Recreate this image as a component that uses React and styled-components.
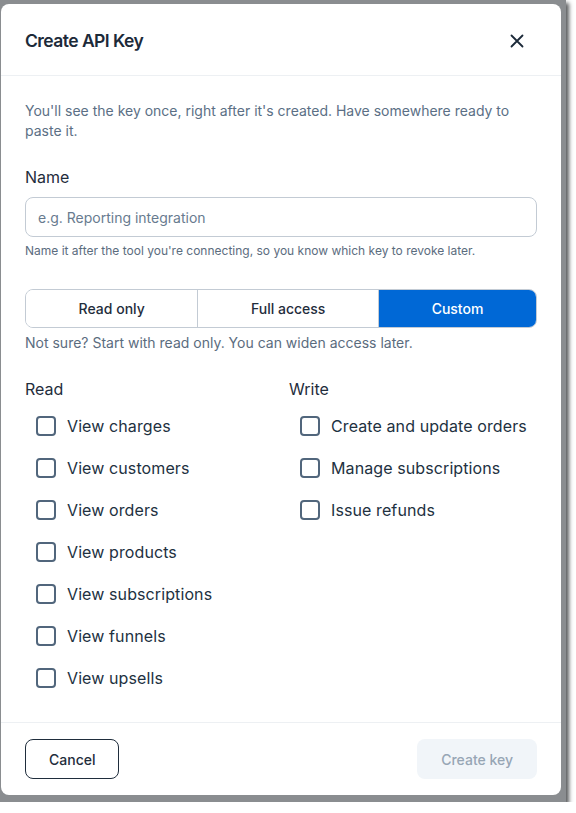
import React, { useState } from "react";
import styled, { createGlobalStyle } from "styled-components";

const Global = createGlobalStyle`
  html, body { margin: 0; padding: 0; background: #ffffff; }
  body { font-family: Inter, "Noto Sans", Arial, sans-serif; }
  * { box-sizing: border-box; }
`;

const Backdrop = styled.div`
  width: 566px;
  height: 802px;
  background: #8a8d90;
  padding: 4px 5px 0 1px;
  box-shadow: 3px 3px 4px rgba(50, 52, 55, 0.8);
`;

const Dialog = styled.div`
  width: 560px;
  height: 791px;
  background: #ffffff;
  border-radius: 8px;
  display: flex;
  flex-direction: column;
  overflow: hidden;
`;

const Header = styled.header`
  height: 72px;
  flex: none;
  padding: 2px 24px 0;
  display: flex;
  align-items: center;
  justify-content: space-between;
  border-bottom: 1px solid #edf0f3;
`;

const Title = styled.h2`
  margin: 0;
  font-size: 17.5px;
  line-height: 24px;
  font-weight: 600;
  letter-spacing: -0.55px;
  color: #1c2a39;
`;

const CloseButton = styled.button`
  width: 40px;
  height: 40px;
  border: none;
  background: transparent;
  display: flex;
  align-items: center;
  justify-content: center;
  color: #1c2a39;
  padding: 0;
  cursor: pointer;
`;

const Body = styled.div`
  flex: 1;
  padding: 25px 24px 0;
  display: flex;
  flex-direction: column;
`;

const Lead = styled.p`
  margin: 0;
  font-size: 14px;
  line-height: 20px;
  color: #5b6f85;
`;

const Label = styled.div`
  margin-top: ${(p) => p.$top || 0}px;
  font-size: 16px;
  line-height: 24px;
  font-weight: 400;
  color: #1f2d3c;
`;

const Input = styled.input`
  margin-top: 8px;
  height: 40px;
  width: 100%;
  border: 1px solid #c3cbd4;
  border-radius: 8px;
  padding: 0 12px;
  font-family: inherit;
  font-size: 14px;
  color: #1f2d3c;
  outline: none;
  &::placeholder { color: #687b8f; }
`;

const Hint = styled.div`
  margin-top: ${(p) => p.$top || 6}px;
  font-size: ${(p) => p.$size || 12}px;
  line-height: ${(p) => (p.$size === 14 ? 20 : 16)}px;
  color: #5b6c7e;
`;

const Segmented = styled.div`
  margin-top: 30px;
  height: 39px;
  display: flex;
  border: 1px solid #c3cbd4;
  border-radius: 8px;
  overflow: hidden;
`;

const Segment = styled.button`
  flex: 1 1 auto;
  padding: 0 16px;
  border: none;
  border-left: ${(p) => (p.$first ? "none" : "1px solid #c3cbd4")};
  background: ${(p) => (p.$active ? "#0068d6" : "#ffffff")};
  color: ${(p) => (p.$active ? "#ffffff" : "#1f2d3c")};
  font-family: inherit;
  font-size: 14px;
  font-weight: 500;
  cursor: pointer;
`;

const Scopes = styled.div`
  margin-top: 24px;
  display: grid;
  grid-template-columns: 1fr 1fr;
  column-gap: 16px;
  align-items: start;
`;

const ScopeColumn = styled.div`
  display: flex;
  flex-direction: column;
`;

const ScopeHeading = styled.div`
  font-size: 16px;
  line-height: 24px;
  font-weight: 400;
  color: #1f2d3c;
  margin-bottom: 4px;
`;

const ScopeItem = styled.label`
  height: 42px;
  display: flex;
  align-items: center;
  gap: 11px;
  padding-left: 11px;
  font-size: 16px;
  letter-spacing: 0.1px;
  color: #22313f;
  cursor: pointer;
`;

const Box = styled.span`
  width: 20px;
  height: 20px;
  flex: none;
  border: 2px solid #51667c;
  border-radius: 4px;
  background: ${(p) => (p.$on ? "#0068d6" : "#ffffff")};
`;

const Footer = styled.footer`
  flex: none;
  border-top: 1px solid #edf0f3;
  padding: 16px 24px;
  display: flex;
  justify-content: space-between;
`;

const Button = styled.button`
  height: 40px;
  padding: 0 ${(p) => (p.$primary ? 24 : 23)}px;
  border-radius: 8px;
  font-family: inherit;
  font-size: 14px;
  font-weight: 500;
  border: ${(p) => (p.$primary ? "none" : "1px solid #1f2d3c")};
  background: ${(p) => (p.$primary ? "#f1f5f9" : "#ffffff")};
  color: ${(p) => (p.$primary ? "#97a6b5" : "#1f2d3c")};
`;

const readScopes = [
  "View charges",
  "View customers",
  "View orders",
  "View products",
  "View subscriptions",
  "View funnels",
  "View upsells",
];

const writeScopes = ["Create and update orders", "Manage subscriptions", "Issue refunds"];

function ScopeList({ title, items }) {
  return (
    <ScopeColumn>
      <ScopeHeading>{title}</ScopeHeading>
      {items.map((s) => (
        <ScopeItem key={s}>
          <Box />
          {s}
        </ScopeItem>
      ))}
    </ScopeColumn>
  );
}

export default function App() {
  const [mode, setMode] = useState("Custom");
  const modes = ["Read only", "Full access", "Custom"];
  return (
    <>
      <Global />
      <Backdrop>
        <Dialog>
          <Header>
            <Title>Create API Key</Title>
            <CloseButton aria-label="Close">
              <svg width="22" height="22" viewBox="0 0 24 24" fill="none" stroke="currentColor" strokeWidth="2" strokeLinecap="round">
                <path d="M18 6 6 18M6 6l12 12" />
              </svg>
            </CloseButton>
          </Header>
          <Body>
            <Lead>
              You'll see the key once, right after it's created. Have somewhere ready to paste it.
            </Lead>
            <Label $top={24}>Name</Label>
            <Input placeholder="e.g. Reporting integration" />
            <Hint>Name it after the tool you're connecting, so you know which key to revoke later.</Hint>
            <Segmented>
              {modes.map((m, i) => (
                <Segment key={m} $first={i === 0} $active={mode === m} onClick={() => setMode(m)}>
                  {m}
                </Segment>
              ))}
            </Segmented>
            <Hint $top={5} $size={14}>Not sure? Start with read only. You can widen access later.</Hint>
            <Scopes>
              <ScopeList title="Read" items={readScopes} />
              <ScopeList title="Write" items={writeScopes} />
            </Scopes>
          </Body>
          <Footer>
            <Button>Cancel</Button>
            <Button $primary>Create key</Button>
          </Footer>
        </Dialog>
      </Backdrop>
    </>
  );
}
